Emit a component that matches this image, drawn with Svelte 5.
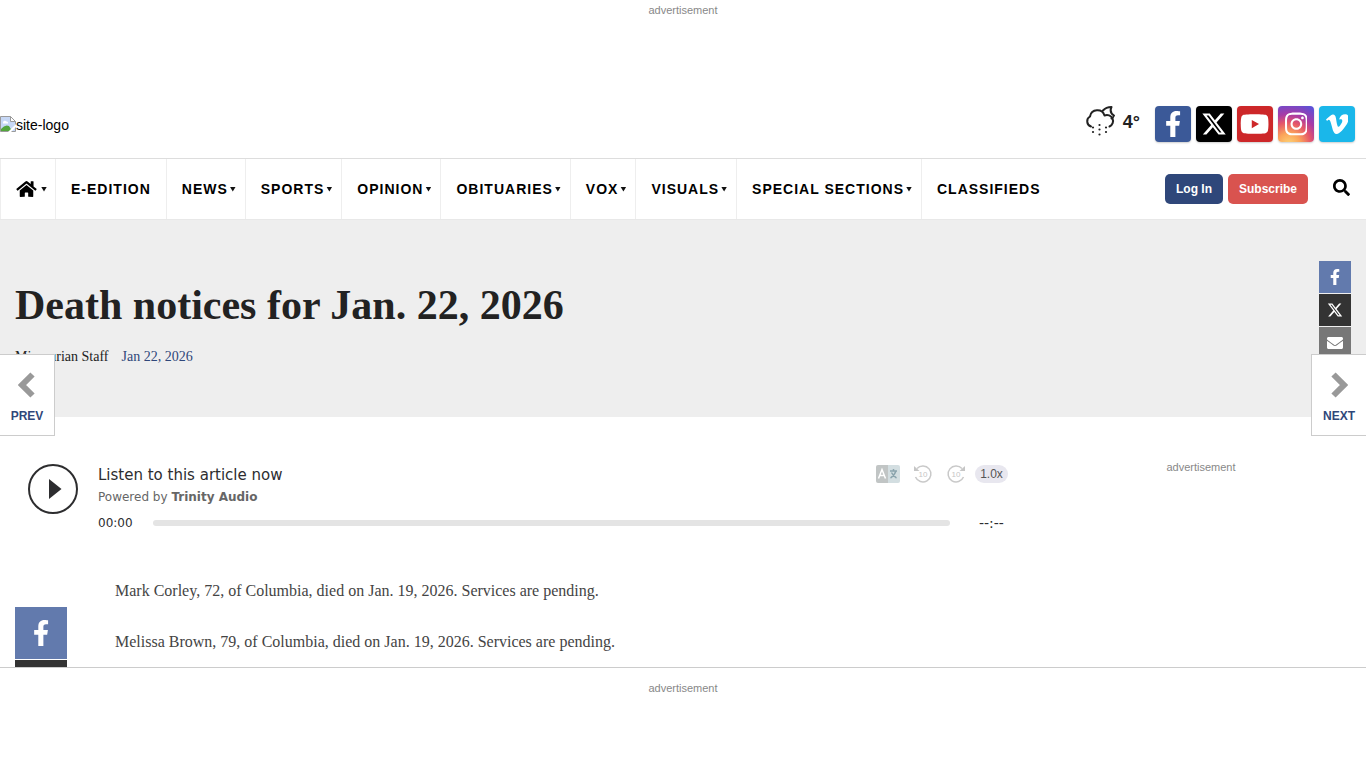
<script>
  const icons = {
    facebook: 'M279.14 288l14.22-92.66h-88.91v-60.13c0-25.35 12.42-50.06 52.24-50.06h40.42V6.26S260.43 0 225.36 0c-73.22 0-121.08 44.38-121.08 124.72v70.62H22.89V288h81.39v224h100.17V288z',
    x: 'M389.2 48h70.6L305.6 224.2 487 464H345L233.7 318.6 106.5 464H35.8L200.7 275.5 26.8 48H172.4L272.9 180.9 389.2 48zM364.4 421.8h39.1L151.1 88h-42L364.4 421.8z',
    youtube: 'M549.655 124.083c-6.281-23.65-24.787-42.276-48.284-48.597C458.781 64 288 64 288 64S117.22 64 74.629 75.486c-23.497 6.322-42.003 24.947-48.284 48.597-11.412 42.867-11.412 132.305-11.412 132.305s0 89.438 11.412 132.305c6.281 23.65 24.787 41.5 48.284 47.821C117.22 448 288 448 288 448s170.78 0 213.371-11.486c23.497-6.321 42.003-24.171 48.284-47.821 11.412-42.867 11.412-132.305 11.412-132.305s0-89.438-11.412-132.305zm-317.51 213.508V175.185l142.739 81.205-142.739 81.201z',
    instagram: 'M224.1 141c-63.6 0-114.9 51.3-114.9 114.9s51.3 114.9 114.9 114.9S339 319.5 339 255.9 287.7 141 224.1 141zm0 189.6c-41.1 0-74.7-33.5-74.7-74.7s33.5-74.7 74.7-74.7 74.7 33.5 74.7 74.7-33.6 74.7-74.7 74.7zm146.4-194.3c0 14.9-12 26.8-26.8 26.8-14.9 0-26.8-12-26.8-26.8s12-26.8 26.8-26.8 26.8 12 26.8 26.8zm76.1 27.2c-1.7-35.9-9.9-67.7-36.2-93.9-26.2-26.2-58-34.4-93.9-36.2-37-2.1-147.9-2.1-184.9 0-35.8 1.7-67.6 9.9-93.9 36.1s-34.4 58-36.2 93.9c-2.1 37-2.1 147.9 0 184.9 1.7 35.9 9.9 67.7 36.2 93.9s58 34.4 93.9 36.2c37 2.1 147.9 2.1 184.9 0 35.9-1.7 67.7-9.9 93.9-36.2 26.2-26.2 34.4-58 36.2-93.9 2.1-37 2.1-147.8 0-184.8zM398.8 388c-7.8 19.6-22.9 34.7-42.6 42.6-29.5 11.7-99.5 9-132.1 9s-102.7 2.6-132.1-9c-19.6-7.8-34.7-22.9-42.6-42.6-11.7-29.5-9-99.5-9-132.1s-2.6-102.7 9-132.1c7.8-19.6 22.9-34.7 42.6-42.6 29.5-11.7 99.5-9 132.1-9s102.7-2.6 132.1 9c19.6 7.8 34.7 22.9 42.6 42.6 11.7 29.5 9 99.5 9 132.1s2.7 102.7-9 132.1z',
    vimeo: 'M447.8 153.6c-2 43.6-32.4 103.3-91.4 179.1-60.9 79.2-112.4 118.8-154.6 118.8-26.1 0-48.2-24.1-66.3-72.3C100.3 250 85.3 174.3 56.2 174.3c-3.4 0-15.1 7.100-35.200 21.100L0 168.200c51.600-45.300 100.900-95.700 131.800-98.500 34.900-3.400 56.300 20.500 64.400 71.500 28.700 181.500 41.400 208.900 93.600 126.700 18.700-29.600 28.800-52.100 30.200-67.600 4.800-45.900-35.800-42.800-63.300-31 22-72.100 64.100-107.100 126.200-105.100 45.800 1.200 67.500 31.100 64.900 89.400z',
    home: 'M280.370 148.260L96 300.110V464a16 16 0 0 0 16 16l112.060-.29a16 16 0 0 0 15.920-16V368a16 16 0 0 1 16-16h64a16 16 0 0 1 16 16v95.640a16 16 0 0 0 16 16.050L464 480a16 16 0 0 0 16-16V300L295.670 148.260a12.190 12.190 0 0 0-15.300 0zM571.600 251.470L488 182.560V44.050a12 12 0 0 0-12-12h-56a12 12 0 0 0-12 12v72.610L318.470 43a48 48 0 0 0-61 0L4.340 251.470a12 12 0 0 0-1.600 16.900l25.500 31A12 12 0 0 0 45.150 301l235.220-193.740a12.190 12.190 0 0 1 15.300 0L530.900 301a12 12 0 0 0 16.900-1.600l25.500-31a12 12 0 0 0-1.700-16.930z',
    search: 'M505 442.700L405.300 343c-4.500-4.500-10.600-7-17-7H372c27.600-35.300 44-79.700 44-128C416 93.100 322.900 0 208 0S0 93.100 0 208s93.100 208 208 208c48.300 0 92.700-16.400 128-44v16.300c0 6.400 2.500 12.500 7 17l99.700 99.700c9.400 9.400 24.600 9.400 33.900 0l28.300-28.300c9.400-9.400 9.400-24.600.1-34zM208 336c-70.700 0-128-57.200-128-128 0-70.700 57.200-128 128-128 70.700 0 128 57.200 128 128 0 70.700-57.200 128-128 128z',
    mail: 'M502.300 190.800c3.900-3.100 9.700-.2 9.700 4.700V400c0 26.500-21.500 48-48 48H48c-26.500 0-48-21.500-48-48V195.600c0-5 5.700-7.800 9.700-4.700 22.400 17.400 52.100 39.500 154.100 113.600 21.100 15.400 56.700 47.800 92.200 47.600 35.700.3 72-32.800 92.300-47.600 102-74.100 131.600-96.300 154-113.700zM256 320c23.200.4 56.600-29.200 73.400-41.400 132.700-96.300 142.800-104.700 173.400-128.700 5.800-4.500 9.200-11.500 9.200-18.900v-19c0-26.500-21.500-48-48-48H48c-26.500 0-48 21.500-48 48v19c0 7.400 3.400 14.300 9.200 18.900 30.600 23.900 40.700 32.400 173.400 128.700 16.800 12.200 50.200 41.800 73.400 41.400z',
  };

  const social = [
    { name: 'Facebook', icon: 'facebook', box: '0 0 320 512' },
    { name: 'X', icon: 'x', box: '0 0 512 512' },
    { name: 'YouTube', icon: 'youtube', box: '0 0 576 512' },
    { name: 'Instagram', icon: 'instagram', box: '0 0 448 512' },
    { name: 'Vimeo', icon: 'vimeo', box: '0 0 448 512' },
  ];

  const sections = [
    { label: 'E-Edition', menu: false },
    { label: 'News', menu: true },
    { label: 'Sports', menu: true },
    { label: 'Opinion', menu: true },
    { label: 'Obituaries', menu: true },
    { label: 'Vox', menu: true },
    { label: 'Visuals', menu: true },
    { label: 'Special Sections', menu: true },
    { label: 'Classifieds', menu: false },
  ];

  const notices = [
    'Mark Corley, 72, of Columbia, died on Jan. 19, 2026. Services are pending.',
    'Melissa Brown, 79, of Columbia, died on Jan. 19, 2026. Services are pending.',
  ];
</script>

{#snippet glyph(name, box, cls)}
  <svg class={cls} viewBox={box} fill="currentColor" aria-hidden="true"><path d={icons[name]} /></svg>
{/snippet}

{#snippet chevron()}
  <svg class="pager-icon" width="18" height="28" viewBox="0 0 18 28" aria-hidden="true"><path d="M3.500 3.500L14 14L3.500 24.500" fill="none" stroke="currentColor" stroke-width="6" stroke-linejoin="miter" /></svg>
{/snippet}

<div class="ad top">advertisement</div>

<header class="masthead">
  <a class="logo" href="#home">
    <svg width="16" height="16" viewBox="0 0 16 16" aria-hidden="true">
      <path d="M.5 .5h10l5 5v10H.5z" fill="#c7d8f6" stroke="#9a9a9a" />
      <path d="M10.500 .5v5h5z" fill="#fff" stroke="#9a9a9a" />
      <path d="M3 6.500a2 2 0 0 1 3.500-1A1.500 1.500 0 0 1 8 7.500H3z" fill="#fff" />
      <path d="M1 15v-2q4-5 8-3l3 5z" fill="#53a63c" />
      <path d="M8 16l8-8v3l-5 5z" fill="#fff" />
    </svg><span>site-logo</span>
  </a>
  <div class="tools">
    <a class="weather" href="#weather">
      <svg width="30" height="32" viewBox="0 0 30 32" fill="none" stroke="#222" stroke-width="2" stroke-linecap="round" stroke-linejoin="round" aria-hidden="true">
        <path d="M6 20.500A5.500 5.500 0 0 1 5 10.500A7.500 7.500 0 0 1 19.500 9.500A5.600 5.600 0 0 1 24.500 20.500" />
        <path d="M18 4.500Q21 1 26.500 1Q24 6.500 29 9.500Q28 12 26.500 12.500" />
        <path stroke-width="2.200" d="M8 21.500h.01M14.500 19h.01M21 21.500h.01M14.500 23.500h.01M8 26h.01M21 26h.01M14.500 28.500h.01" />
      </svg>
      <span>4°</span>
    </a>
    <div class="social">
      {#each social as s}
        <a class="tile {s.icon}" href="#{s.icon}" aria-label={s.name}>{@render glyph(s.icon, s.box, 'tile-icon')}</a>
      {/each}
    </div>
  </div>
</header>

<nav>
  <ul>
    <li class="home"><a href="#home" aria-label="Home">{@render glyph('home', '0 0 576 512', 'home-icon')}<i class="caret"></i></a></li>
    {#each sections as s}
      <li class:plain={!s.menu}><a href="#{s.label}">{s.label}{#if s.menu}<i class="caret"></i>{/if}</a></li>
    {/each}
  </ul>
  <div class="account">
    <button class="login">Log In</button>
    <button class="subscribe">Subscribe</button>
    <button class="search" aria-label="Search">{@render glyph('search', '0 0 512 512', 'search-icon')}</button>
  </div>
</nav>

<section class="headline">
  <div>
    <h1>Death notices for Jan. 22, 2026</h1>
    <p class="byline"><span>Missourian Staff</span><time>Jan 22, 2026</time></p>
  </div>
  <div class="share small">
    <a class="fb" href="#share-facebook" aria-label="Facebook">{@render glyph('facebook', '0 0 320 512', 'share-icon')}</a>
    <a class="tw" href="#share-x" aria-label="X">{@render glyph('x', '0 0 512 512', 'share-icon')}</a>
    <a class="em" href="#share-email" aria-label="Email">{@render glyph('mail', '0 0 512 512', 'share-icon')}</a>
  </div>
</section>

<main>
  <article>
    <div class="player">
      <button class="play" aria-label="Play">
        <svg width="50" height="50" viewBox="0 0 50 50" aria-hidden="true"><circle cx="25" cy="25" r="24" fill="none" stroke="#2d2d2f" stroke-width="2" /><path d="M21 15v20l12.500-10z" fill="#2d2d2f" /></svg>
      </button>
      <div class="panel">
        <div class="info">
          <div>
            <div class="listen">Listen to this article now</div>
            <div class="powered">Powered by <b>Trinity Audio</b></div>
          </div>
          <div class="controls">
            <button aria-label="Translate">
              <svg width="24" height="18" viewBox="0 0 24 18" aria-hidden="true">
                <path d="M2 0h10v18H2a2 2 0 0 1-2-2V2a2 2 0 0 1 2-2z" fill="#c1c5c5" />
                <path d="M12 0h10a2 2 0 0 1 2 2v14a2 2 0 0 1-2 2H12z" fill="#d3dee1" />
                <path d="M2.500 13.500L6 4.500l3.500 9M4 10.500h4" fill="none" stroke="#fff" stroke-width="1.500" />
                <path d="M14 6h7M17.500 4v2M20 6q-2 5-5.500 7M15.500 7.500q2 4 5 5.500" fill="none" stroke="#8ba4ad" stroke-width="1.500" />
              </svg>
            </button>
            {#each [false, true] as forward}
              <button aria-label={forward ? 'Forward 10 seconds' : 'Back 10 seconds'}>
                <svg width="20" height="20" viewBox="0 0 20 20" aria-hidden="true">
                  <g transform={forward ? 'translate(20 0) scale(-1 1)' : null}>
                    <path d="M4 4.500A8 8 0 1 1 2.500 13" fill="none" stroke="#c9c9c9" stroke-width="1.500" />
                    <path d="M1 2v5h5.500z" fill="#c6c6c6" />
                  </g>
                  <text x="10" y="13" text-anchor="middle" font-size="8" fill="#c6c6c6">10</text>
                </svg>
              </button>
            {/each}
            <button class="speed">1.0x</button>
          </div>
        </div>
        <div class="progress"><span>00:00</span><div class="track"></div><span class="total">--:--</span></div>
      </div>
    </div>
    <div class="story">
      <div class="share large">
        <a class="fb" href="#share-facebook" aria-label="Facebook">{@render glyph('facebook', '0 0 320 512', 'share-icon')}</a>
        <a class="tw" href="#share-x" aria-label="X">{@render glyph('x', '0 0 512 512', 'share-icon')}</a>
      </div>
      <div class="text">
        {#each notices as n}<p>{n}</p>{/each}
      </div>
    </div>
  </article>
  <aside class="ad">advertisement</aside>
</main>

<a class="pager prev" href="#prev">{@render chevron()}<span>Prev</span></a>
<a class="pager next" href="#next">{@render chevron()}<span>Next</span></a>
<div class="ad dock">advertisement</div>

<style>
  :global(body) {
    background: #fff;
    color: #222;
    font-family: "Liberation Sans", Arial, sans-serif;
    overflow: hidden;
  }
  :global(*) { box-sizing: border-box; }
  svg { display: block; }
  a { color: inherit; text-decoration: none; }
  button { border: 0; padding: 0; background: none; font: inherit; cursor: pointer; }

  .ad { color: #888; font-size: 11px; line-height: 12px; text-align: center; }
  .top { padding-top: 4px; height: 92px; }

  .masthead { display: flex; align-items: center; justify-content: space-between; height: 66px; padding-right: 11px; }
  .logo { display: flex; font-size: 14px; line-height: 20px; color: #000; }
  .logo svg { margin-top: 1px; }
  .tools { display: flex; align-items: center; gap: 15px; padding-bottom: 2px; }
  .weather { display: flex; align-items: center; gap: 8px; font-size: 18px; font-weight: bold; padding-bottom: 4px; }
  .social { display: flex; gap: 5px; }
  .tile { display: flex; align-items: center; justify-content: center; width: 36px; height: 36px; border-radius: 4px; color: #fff; box-shadow: 0 1px 2px #0003; }
  .tile-icon { height: 26px; }
  .facebook { background: #3b5998; }
  .x { background: #000; }
  .youtube { background: #cd2729; }
  .vimeo { background: #1ab7ea; }
  .instagram { background: radial-gradient(circle at 30% 107%, #fdd576 0%, #fba45a 25%, #e5566a 48%, #a83ba6 66%, #5b51d8 95%); }

  nav { display: flex; justify-content: space-between; height: 62px; border-top: 1px solid #ddd; border-bottom: 1px solid #e8e8e8; }
  ul { display: flex; margin: 0; padding: 0; list-style: none; }
  li { border-left: 1px solid #eee; }
  li a { display: flex; align-items: center; height: 100%; padding: 0 9px 0 15px; color: #000; font-size: 14px; font-weight: bold; letter-spacing: 1px; text-transform: uppercase; white-space: nowrap; }
  .home a { padding-right: 8px; }
  .plain a { padding-right: 15px; }
  .home-icon { height: 18px; width: 21px; margin-right: 2px; }
  .caret { width: 6px; height: 5px; margin-left: 2px; background: #111; clip-path: polygon(0 0, 100% 0, 50% 100%); }
  .account { display: flex; align-items: center; gap: 5px; padding-right: 16px; }
  .login, .subscribe { height: 30px; padding: 0 11px; border-radius: 5px; color: #fff; font-size: 12px; font-weight: bold; }
  .login { background: #2f477a; }
  .subscribe { background: #d9534f; }
  .search { margin-left: 20px; color: #000; padding-bottom: 4px; }
  .search-icon { width: 17px; height: 17px; }

  .headline { display: flex; justify-content: space-between; height: 197px; padding: 41px 15px 0; background: #eee; }
  h1 { margin: 19px 0 0; font-family: "Liberation Serif", serif; font-size: 42px; line-height: 50px; color: #222; }
  .byline { display: flex; gap: 13px; margin: 18px 0 0; font: 14px/18px "Liberation Serif", serif; color: #222; }
  time { color: #2f477a; }
  .share { display: flex; flex-direction: column; gap: 1px; }
  .share a { display: flex; align-items: center; justify-content: center; color: #fff; }
  .small a { width: 32px; height: 32px; }
  .small .share-icon { height: 16px; }
  .large a { width: 52px; height: 52px; }
  .large .share-icon { height: 26px; }
  .fb { background: #627aad; }
  .tw { background: #333; }
  .em { background: #777; }

  main { display: grid; grid-template-columns: minmax(0, 1fr) 300px; column-gap: 30px; padding: 44px 15px 0; }
  article { min-width: 0; }
  .player { display: flex; gap: 20px; padding: 3px 13px 0; font-family: "DejaVu Sans", Verdana, sans-serif; color: #2d2d2f; }
  .play { align-self: flex-start; }
  .panel { flex: 1; }
  .info { display: flex; justify-content: space-between; }
  .listen { font-size: 15px; line-height: 22px; }
  .powered { font-size: 12px; line-height: 22px; color: #666; }
  .controls { display: flex; align-items: center; gap: 13px; height: 20px; }
  .controls text { font-family: "Liberation Sans", sans-serif; }
  .speed { height: 18px; width: 33px; margin-left: -4px; border-radius: 9px; background: #e8e7ef; color: #555; font: 12px/18px "Liberation Sans", sans-serif; }
  .progress { display: flex; align-items: center; font-size: 12px; line-height: 20px; margin-top: 5px; }
  .track { flex: 1; height: 6px; margin: 0 29px 0 20px; border-radius: 3px; background: #e4e4e4; }
  .total { width: 29px; font-size: 14px; }
  .story { display: flex; gap: 48px; margin-top: 45px; }
  .large { margin-top: 29px; }
  .text { font: 16px/26px "Liberation Serif", serif; color: #444; }
  .text p { margin: 0 0 25px; }

  .pager { position: fixed; top: 354px; display: flex; flex-direction: column; align-items: center; width: 55px; height: 82px; padding-top: 16px; border: 1px solid #ccc; background: #fff; color: #2f477a; font-size: 12px; font-weight: bold; line-height: 16px; text-transform: uppercase; }
  .pager-icon { color: #999; margin-bottom: 9px; }
  .prev { left: 0; border-left: 0; }
  .prev .pager-icon { transform: scaleX(-1); }
  .next { right: 0; border-right: 0; }
  .dock { position: fixed; left: 0; right: 0; bottom: 0; height: 101px; padding-top: 14px; border-top: 1px solid #ccc; background: #fff; }
</style>
